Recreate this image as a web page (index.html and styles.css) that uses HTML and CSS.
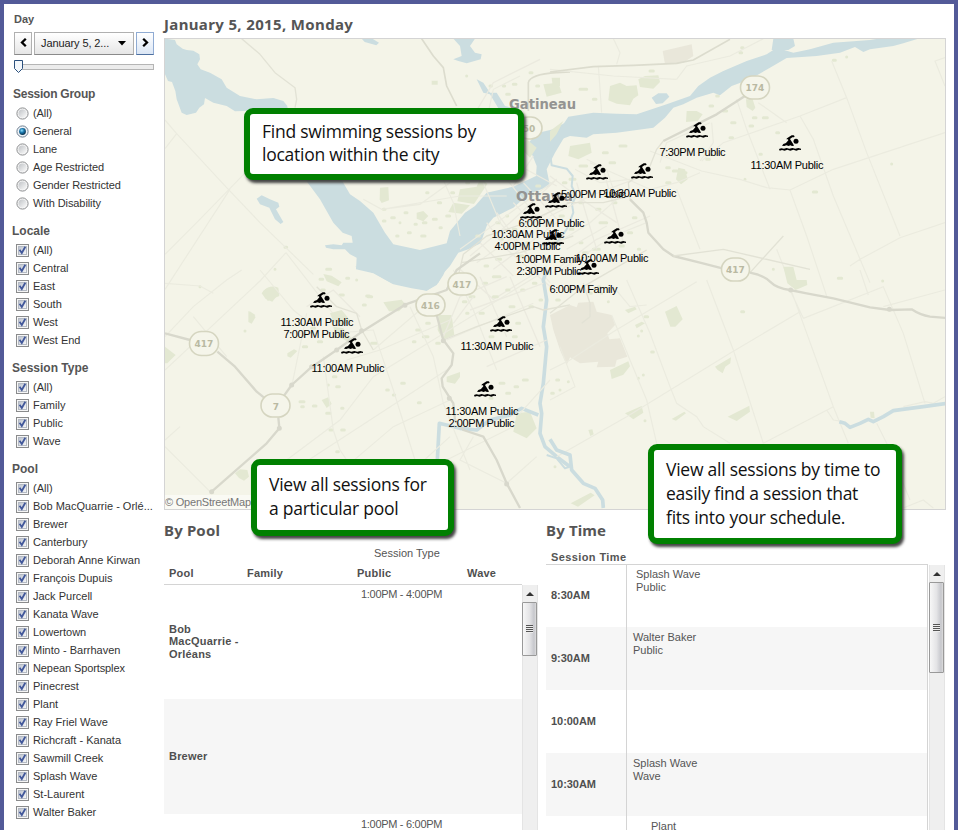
FILE: index.html
```html
<!DOCTYPE html>
<html lang="en">
<head>
<meta charset="utf-8">
<title>Swimming sessions</title>
<link rel="stylesheet" href="styles.css">
</head>
<body>
<svg class="defs" width="0" height="0" aria-hidden="true">
  <defs>
    <linearGradient id="boxg" x1="0" y1="0" x2="1" y2="1"><stop offset="0" stop-color="#b9c0cc"/><stop offset="1" stop-color="#fafafa"/></linearGradient>
    <radialGradient id="dot" cx=".4" cy=".35" r=".7"><stop offset="0" stop-color="#8fe0ff"/><stop offset=".45" stop-color="#1c78ad"/><stop offset="1" stop-color="#06263f"/></radialGradient>
    <linearGradient id="rad" x1="0" y1="0" x2="1" y2="1"><stop offset="0" stop-color="#bfc2c6"/><stop offset="1" stop-color="#fbfbfb"/></linearGradient>
    <symbol id="check" viewBox="0 0 13 13"><rect x=".5" y=".5" width="12" height="12" fill="#f6f6f6" stroke="#8a8b8c"/><rect x="2.5" y="2.500" width="8" height="8" fill="url(#boxg)" stroke="#b4bac4"/><path d="M3.600 5.800l2.200 3.200L9.300 2.800" fill="none" stroke="#41579a" stroke-width="1.800"/></symbol>
    <symbol id="radio" viewBox="0 0 13 13"><circle cx="6.500" cy="6.500" r="5.600" fill="#f5f5f5" stroke="#8c8e90"/><circle cx="6.500" cy="6.500" r="4" fill="url(#rad)"/></symbol>
    <symbol id="radio-on" viewBox="0 0 13 13"><circle cx="6.500" cy="6.500" r="5.600" fill="#eef3f8" stroke="#6f7f90"/><circle cx="6.500" cy="6.500" r="3.400" fill="url(#dot)"/></symbol>
    <symbol id="swim" viewBox="0 0 66 51" overflow="visible"><circle cx="51" cy="19" r="7.500"/><path d="M24 10L38 1h6l3 3-2 3h-5l-7 5 9 14 3 6-6 1-5-2-5 2-7-2-6 2-7-1 4-5 8-3 7-8-1-3h-5z"/><path d="M0 42l7-2 8 1 8-2 8 2 9-2 9 2 9-2 8 2v4l-6-1-8 3-9-3-9 3-9-3-8 3-8-2-7 2z"/></symbol>
  </defs>
</svg>
<div class="page">
  <div class="banner"><span class="tail tail-g"></span><span class="tail t2"></span><span class="tail tail-g t3"></span><span class="tail t4"></span><span class="tail t5"></span></div>

  <aside class="filters">
    <h3 class="day-title">Day</h3>
    <div class="day-picker">
      <button class="step"><svg width="9" height="11" viewBox="0 0 9 11"><path d="M6.800 1.800L3 5.500l3.800 3.700" fill="none" stroke="#000" stroke-width="2.300"/></svg></button>
      <button class="date"><span>January 5, 2...</span><svg width="8" height="5" viewBox="0 0 8 5"><path d="M0 0h8L4 4.600z"/></svg></button>
      <button class="step next"><svg width="9" height="11" viewBox="0 0 9 11"><path d="M2.200 1.800L6 5.500 2.200 9.200" fill="none" stroke="#000" stroke-width="2.300"/></svg></button>
    </div>
    <div class="slider"><svg class="thumb" width="9" height="13" viewBox="0 0 9 13"><path d="M.5.5h8v8l-4 4-4-4z" fill="#f3f7fb" stroke="#2a4f7c"/></svg></div>

    <section class="group"><h3 class="wide">Session Group</h3>
      <ul class="radios">
        <li><svg><use href="#radio"/></svg>(All)</li>
        <li><svg><use href="#radio-on"/></svg>General</li>
        <li><svg><use href="#radio"/></svg>Lane</li>
        <li><svg><use href="#radio"/></svg>Age Restricted</li>
        <li><svg><use href="#radio"/></svg>Gender Restricted</li>
        <li><svg><use href="#radio"/></svg>With Disability</li>
      </ul>
    </section>
    <section class="group"><h3>Locale</h3>
      <ul>
        <li><svg><use href="#check"/></svg>(All)</li>
        <li><svg><use href="#check"/></svg>Central</li>
        <li><svg><use href="#check"/></svg>East</li>
        <li><svg><use href="#check"/></svg>South</li>
        <li><svg><use href="#check"/></svg>West</li>
        <li><svg><use href="#check"/></svg>West End</li>
      </ul>
    </section>
    <section class="group"><h3>Session Type</h3>
      <ul>
        <li><svg><use href="#check"/></svg>(All)</li>
        <li><svg><use href="#check"/></svg>Family</li>
        <li><svg><use href="#check"/></svg>Public</li>
        <li><svg><use href="#check"/></svg>Wave</li>
      </ul>
    </section>
    <section class="group"><h3>Pool</h3>
      <ul>
        <li><svg><use href="#check"/></svg>(All)</li>
        <li><svg><use href="#check"/></svg>Bob MacQuarrie - Orlé...</li>
        <li><svg><use href="#check"/></svg>Brewer</li>
        <li><svg><use href="#check"/></svg>Canterbury</li>
        <li><svg><use href="#check"/></svg>Deborah Anne Kirwan</li>
        <li><svg><use href="#check"/></svg>François Dupuis</li>
        <li><svg><use href="#check"/></svg>Jack Purcell</li>
        <li><svg><use href="#check"/></svg>Kanata Wave</li>
        <li><svg><use href="#check"/></svg>Lowertown</li>
        <li><svg><use href="#check"/></svg>Minto - Barrhaven</li>
        <li class="tight"><svg><use href="#check"/></svg>Nepean Sportsplex</li>
        <li><svg><use href="#check"/></svg>Pinecrest</li>
        <li><svg><use href="#check"/></svg>Plant</li>
        <li><svg><use href="#check"/></svg>Ray Friel Wave</li>
        <li><svg><use href="#check"/></svg>Richcraft - Kanata</li>
        <li><svg><use href="#check"/></svg>Sawmill Creek</li>
        <li><svg><use href="#check"/></svg>Splash Wave</li>
        <li><svg><use href="#check"/></svg>St-Laurent</li>
        <li><svg><use href="#check"/></svg>Walter Baker</li>
      </ul>
    </section>
  </aside>

  <main class="main">
    <h1 class="title">January 5, 2015, Monday</h1>
    <div class="map">
      <svg width="780" height="470" viewBox="165 39 780 470">
        <!-- west and north -->
        <g transform="translate(160 36) scale(.33333)">
          <g class="water">
            <path d="M15 8L45 12 50 25 68 38 80 42 100 44 118 55 120 70 112 85 122 100 150 110 185 130 200 155 240 180 290 190 340 186 370 195 382 210 380 220H300L250 225 225 226 200 210 160 200 135 186 132 205 118 215 108 230 80 237 65 230 50 190 46 165 36 138 24 135 15 115Z"/>
            <path d="M330 200L380 210 430 300 545 432 570 475 600 495 640 530 675 590 700 625 780 642 860 622 870 585 915 530 945 510 980 470 1060 452 1128 420 1130 390 1110 340 1105 320 1135 290 1180 280 1215 260 1215 300 1185 350 1160 400 1170 450 1105 475 1060 515 1000 545 980 570 962 622 925 640 895 650 870 690 850 712 835 740 800 764 755 757 700 745 640 712 588 700 590 665 570 655 555 640 520 640 498 635 495 628 520 625 545 628 550 620 578 620 575 600 548 590 520 560 480 490 437 432 370 330Z"/>
            <path d="M290 488L305 478 330 490 355 500 358 512 348 520 370 558 362 564 345 550 328 515 300 505Z"/>
            <path d="M880 8H945L930 30 945 50 965 55 962 70 920 82 895 75 880 70 905 60 900 30Z"/>
            <path d="M605 8h32l20 12-8 8-35-10z"/>
            <path d="M950 130l20 10 20 30 20 0 25 40 20 5-5 20-30-10-30-50-20-5z"/>
          </g>
          <g class="park">
            <path d="M660 455l25-2 2 40-22 8-6-10zM900 460l50-8 12-28 20 20-40 60-50-8zM880 500l50 8-25 25-40-5zM770 530l20-5 15 15-15 16-20-8zM1100 310l30 25-20 30-30-30zM815 134h18v12h-18z"/>
            <path d="M1150 145l45-5 10 30-45 12zM310 765q20-20 45-10l3 25-35 15zM265 825l22 18-12 20-10-5z"/>
          </g>
          <g class="dots"><path d="M695 545h8M720 560h0M735 530h6M765 565h4M820 550h9M840 575h4M745 590h6M710 600h4M785 600h10M800 470h4M835 500h7M950 600h8M1010 560h9M1040 540h3M1060 580h8M920 120h0M1030 150h4M1060 145h8M1110 110h6M1130 150h6M1040 175h8M990 150h4M1080 240h8M375 634h5M345 700h0M480 730h8M500 700h12M620 780h8M670 520h5M860 540h9M875 470h6M920 440h6M790 560h8M670 555h5M1020 610h7M1100 620h8M1170 560h8M1010 670h12M1080 660h9M975 690h8M1130 450h9"/></g>
          <g class="thin">
            <path d="M15 252L50 293 200 455 300 560 460 715"/><path d="M15 338L50 293M15 655L110 560 300 365 430 235M15 760L210 460M378 650L300 735 15 1002M378 650L540 860"/>
            <path d="M610 490L665 520 780 505 870 440M665 520L900 480 1040 480M850 432L880 500 900 600M970 440L1020 560 1170 740M1040 430L1170 590M900 640L1190 430M950 680L1180 520M980 250L1000 160 1080 120M1020 340L980 430"/>
          </g>
          <g class="city"><path d="M980 560L1040 640 1180 760M1010 530L1120 680M1060 500L1190 640M930 660L1050 560 1190 430M1000 700L1190 560M900 700L1000 790 1160 690M1090 440L1200 560M1120 360L1060 450M960 620L1060 720M1190 450L1080 390M940 240L1000 140 1140 70"/></g>
          <g class="road"><path d="M785 8L820 60 850 95 860 150 890 210M1105 225V140Q1110 115 1190 110L1230 108"/><path d="M245 8L300 55 345 110 405 155 410 190 405 215M1230 500L1100 560 980 600 910 655 890 740M905 680L1080 650 1240 600" class="soft"/></g>
        </g>
        <!-- east and north -->
        <g transform="translate(550 36) scale(.33333)">
          <g class="park"><path d="M180 150l30-10 20 10 30-2 5 30-15 10-10 20-40-5-25-10zM265 130l20-10 40-2 5 20-20 20-40-5zM5 125h25v25H8zM60 330l60-10 5 30-40 20-30-10zM0 285l40-30-20 40-20 22zM385 395l20 5 8 30-20 15-15-15zM410 225l30 0 18 10-15 20-35 3zM588 190l20 0 8 25-8 10-18-12z"/></g>
          <path class="sand" d="M338 45L425 25 430 60 400 80 345 84Z"/>
          <g class="dots"><path d="M90 160h20M30 200h15M130 190h8M300 105h10M570 50h5M575 35h4M850 73h6M890 63h0M480 210h8M500 180h5M520 225h10M545 260h10M610 245h8M640 245h12M600 270h8M680 290h6M1025 384h0M790 468h10M630 355h4M450 340h10M470 370h8M540 305h8M370 405h12M350 440h10M400 410h8M585 430h0M150 560h20M210 630h10M130 640h18M90 620h6M235 590h10M250 545h8M40 440h8M210 330h18M160 350h12M180 380h14M90 390h20M60 430h15M350 395h8M670 700h0M265 640h4M90 500h8M140 520h10M190 500h8M60 580h9M30 540h10M100 650h12"/></g>
          <g class="water">
            <path d="M-12 345L5 320 30 280 55 242 130 230 200 233 260 235 350 205 420 180 445 150 480 125 520 105 590 75 650 55 680 35 730 50 780 40 850 20 960 12 985 8H1105L1060 22 1030 30 960 40 940 48 915 33 870 50 800 60 710 66 660 95 600 130 545 150 510 178 490 170 440 185 400 205 370 215 345 245 310 275 200 290 130 295 110 305 60 300 20 315 5 345-12 365Z"/>
            <path d="M670 8h60l5 22-20 12-50 0zM305 185l20-13 25 0 8 10-20 20-20 2z"/>
            <path class="creek" d="M0 350L5 388 50 398 68 420 65 450 78 480 66 505 70 530 50 580 20 620-10 640"/>
          </g>
          <g class="thin">
            <path d="M190 8L210 50 200 85M145 90L155 230M845 75L890 185 950 350 1050 600M890 185L750 240 520 320 455 375M750 240L790 310 850 480 960 740M560 190L590 280 660 460M625 200L710 260M300 345L455 405 570 430 650 455 720 462 770 600 830 780M720 462L850 400 1185 290M1185 65L1155 75 1185 150M380 460L450 640M1185 560L1050 605 930 670 900 690M300 460L380 440 450 410M380 130L410 90 540 60 640 8M330 380L350 320 480 260M680 640L720 740"/>
            <path d="M200 490L120 560-10 640M200 490L170 400 110 370M120 380L300 460M75 400L150 440 240 430M290 560L190 600 20 710M50 640L170 570M0 100L190 120 380 130M450 375L490 320 485 260"/>
          </g>
          <g class="city"><path d="M0 420L80 480 200 560M80 440L140 640M160 400L220 620M0 540L120 480 280 420M20 700L140 610 300 540"/></g>
          <g class="road"><path d="M0 108L130 92 250 88 380 82 430 72 540 10"/><path class="big" d="M600 170L500 235 340 315M240 490L280 530 290 560 295 590 340 640 370 660 450 680 520 698"/><path class="soft" d="M340 315L320 340 300 390 235 440 240 490M240 480L160 500 50 500M600 710L700 600M370 660L520 640 780 700"/></g>
        </g>
        <!-- west and south -->
        <g transform="translate(160 270) scale(.33333)">
          <g class="park"><path d="M670 97l55-8 12 15-20 20-30 0zM835 135l40 0 8 60-35 15-15-30zM305 70q10-20 40-18l12 18-20 25-20-8zM268 123l18 12-15 20zM382 250l20-12 10 5-20 20-10-4zM15 230l32 25-25 25-7 0zM225 610l15-12 22 2 5 20-15 12-15-8zM490 12l25 5 30 20-10 12-35-15zM510 130l35-10 25 30-20 15-30-10zM860 320l40-14 0 15-15 20-25-5zM1070 430l40-5 20 50-30 30-40-20zM485 390l20-8 10 20-15 12zM520 170l30 5 25 30-10 10-40-20z"/></g>
          <g class="dots"><path d="M485 60h8M540 75h10M560 25h6M590 30h0M625 80h10M610 105h6M420 395h12M425 410h5M460 408h8M500 430h10M545 415h4M520 320h8M530 350h8M505 345h0M510 480h6M545 480h8M530 545h5M430 230h10M475 215h10M455 175h9M635 220h14M680 360h5M725 340h8M700 375h4M775 398h6M770 180h10M800 160h8M790 200h14M830 220h8M760 215h5M990 385h6M1020 340h12M1040 370h9M970 40h10M1000 80h12M1040 60h7M930 80h12M960 130h10M1085 60h7M1110 110h8M1070 160h9M1060 200h9M920 130h4M990 200h9M1090 330h12M1065 350h8M120 50h0M255 183h0M1000 20h20M910 95h8M1050 110h12M1120 40h8M1140 90h5"/></g>
          <g class="water">
            <path class="river" d="M1160 0L1150 30 1160 90 1150 170 1160 230 1150 340 1140 400 1145 430 1140 490 1155 530 1190 560 1230 590"/>
            <path class="river" d="M832 570L838 460 900 475 950 480 990 450 1050 435 1085 415 1135 435"/>
            <path d="M585-10L640 8 695 40 760 52 800 62 830 45 850 15 860-10z"/>
          </g>
          <g class="thin">
            <path d="M15 200L100 110 200 30 245 0M300 0L400 120 450 160M15 530L90 605 150 665M15 510L60 470M440 130L395 350M520 190L640 180 700 360 765 570M300 630L540 450 640 320 1160 0M490 260L520 480 540 540M400 600L860 300M560 270L660 240 870 150M500 640L700 470 870 390M620 570L760 600 870 500M750 110L820 260 850 400 930 600M860 210L1120 100M880 0L940 120 1010 300M840 580L1060 470M940 500L900 570 1040 640 1130 560M1080 430L1170 330M780 120L640 240M540 540L580 600M200 260L100 140M15 40L120 48 160 70"/>
          </g>
          <g class="city"><path d="M850 200L900 80 1040 20M930 120L1150 40M960 20L1040 200M1050 20L1140 230M980 290L1160 210M880 160L940 80M440 110L520 60 600 140"/></g>
          <g class="road">
            <path class="big" d="M15 190L90 210M172 245L225 290 290 365 315 385M370 380L395 345 450 295 530 240 610 182 735 104 860 60 890 0 960-50M355 442L358 475 320 520 155 665"/>
            <path class="big" d="M830 135L850 210 880 250 875 285 845 325 848 350 880 400 885 450 910 480 970 500 1010 570 1040 640 1080 714"/>
            <path class="soft" d="M850 210L950 170 1120 110 1150 120 1230 105M470 50L530 110 590 130 605 180 640 240"/>
            <path class="knots" d="M395 345h0M530 240h0M605 182h0M735 106h0M850 212h0M868 385h0M1040 642h0M155 665h0M358 475h0M455 290h0"/>
          </g>
        </g>
        <!-- east and south -->
        <g transform="translate(550 270) scale(.33333)">
          <path class="sand" d="M0 135L60 105 80 112 85 98 130 95 140 125 185 135 195 165 172 190 178 208 210 205 232 260 200 270 195 290 140 292 145 275 90 280 60 262 50 285 30 240 10 180Z"/>
          <g class="park"><path d="M345 125l35-17 18 40-22 22-15 0zM180 300l55-26 5 15-20 25-35 13zM495 290l48-28-2 18-15 10-8 20-15-10zM533 440l65-33 2 18-40 28zM225 430l50-22 5 20-30 20zM365 447l38-22 5 5-30 22zM62 700l60-32 12 8-50 34zM700-10h30l10 40 30 0 2 15-35 15-25-20zM225 120l30-10 5 8-25 12zM255 165l20-10 10 5-25 15zM960 425l12 0 2 20-12-2zM115 480l12-2 4 15-10 5z"/></g>
          <g class="dots"><path d="M285 140h8M575 125h6M865 25h10M998 33h0M305 246h5M265 198h0M275 183h0M280 315h0M265 325h0M285 452h0M20 330h6M55 335h0M30 360h0M5 370h5M145 50h4M155 70h0M175 95h0M120 70h4M60 60h8M20 90h8M15 590h0"/></g>
          <g class="thin"><path d="M185 135L240 270 290 390 320 520M470 30L550 240 640 520M725 65L850 410 895 520M0 300L60 270 190 185 440 35M0 390L75 350 30 230M20 560L230 440 540 250 750 125M230 30L300 190 360 350 380 400 440 440 460 470 540 520M640 520L850 410M760 145L1000 50 1060 190 1125 400M720 60L760 145M1000 110L1185 60M830 420L850 450 880 455M1060 410L1125 395 1150 400 1185 380M980 460L1010 520 1080 690M1060 714L1120 690 1150 714M190 50L240 110 290 105M955 75L930 0"/></g>
          <g class="road"><path class="big" d="M600 8Q640 15 660 35T720 60L770 70 850 85 960 112 1020 120 1085 118Q1110 135 1140 140L1190 144"/><path class="soft" d="M100 40L120 100 120 140 95 160M0 130L100 50 290-60"/><path class="knots" d="M722 60h0M1018 118h0"/></g>
          <g class="water"><path class="river" d="M868 455L885 460 900 472 930 460 955 448 970 455 1000 440 1030 422 1080 415 1120 410 1190 400"/><path class="river" d="M0 508L20 540 60 555 65 600 100 640 135 655 158 690 160 714"/><path class="creek" d="M-10 555L20 565 45 595 60 590"/></g>
        </g>

        <g class="shield">
          <rect x="740.500" y="76" width="29" height="23" rx="11.500"/><text x="755" y="91">174</text>
          <rect x="517" y="117" width="25" height="22" rx="11"/><text x="529" y="132">50</text>
          <rect x="189.500" y="331.500" width="29" height="24" rx="12"/><text x="204" y="347">417</text>
          <rect x="261" y="394" width="29" height="23" rx="11.500"/><text x="276" y="410">7</text>
          <rect x="416" y="294" width="29" height="22" rx="11"/><text x="430.500" y="309">416</text>
          <rect x="448" y="273" width="29" height="22" rx="11"/><text x="462" y="288">417</text>
          <rect x="721.500" y="258" width="28" height="23" rx="11.500"/><text x="735.500" y="273">417</text>
        </g>
        <g class="city-name"><text x="509" y="109" textLength="67" lengthAdjust="spacingAndGlyphs">Gatineau</text><text x="516" y="201" textLength="57" lengthAdjust="spacingAndGlyphs">Ottawa</text></g>

        <g class="pools">
          <use href="#swim" x="686" y="122" width="22" height="17"/><use href="#swim" x="779" y="135" width="22" height="17"/>
          <use href="#swim" x="586" y="164" width="22" height="17"/><use href="#swim" x="631" y="163" width="22" height="17"/>
          <use href="#swim" x="545" y="192" width="22" height="17"/><use href="#swim" x="520" y="203" width="22" height="17"/>
          <use href="#swim" x="542" y="229" width="22" height="17"/><use href="#swim" x="604" y="228" width="22" height="17"/>
          <use href="#swim" x="577" y="259" width="22" height="17"/><use href="#swim" x="310" y="292" width="22" height="17"/>
          <use href="#swim" x="341" y="338" width="22" height="17"/><use href="#swim" x="490" y="316" width="22" height="17"/>
          <use href="#swim" x="474" y="381" width="22" height="17"/>
          <text x="659.500" y="156" textLength="66">7:30PM Public</text>
          <text x="750.500" y="169" textLength="73">11:30AM Public</text>
          <text x="561" y="198" textLength="65">5:00PM Public</text>
          <text x="603.500" y="197" textLength="73">10:30AM Public</text>
          <text x="518.500" y="227" textLength="66">6:00PM Public</text>
          <text x="491.500" y="238" textLength="73">10:30AM Public</text>
          <text x="494.500" y="250" textLength="66">4:00PM Public</text>
          <text x="515.500" y="263" textLength="68">1:00PM Family</text>
          <text x="516.500" y="275" textLength="65">2:30PM Public</text>
          <text x="575.500" y="262" textLength="73">10:00AM Public</text>
          <text x="549.500" y="293" textLength="68">6:00PM Family</text>
          <text x="280.500" y="326" textLength="73">11:30AM Public</text>
          <text x="283.500" y="338" textLength="66">7:00PM Public</text>
          <text x="311.500" y="372" textLength="73">11:00AM Public</text>
          <text x="460.500" y="350" textLength="73">11:30AM Public</text>
          <text x="445.500" y="415" textLength="73">11:30AM Public</text>
          <text x="448.500" y="427" textLength="66">2:00PM Public</text>
        </g>
        <rect x="165" y="495" width="100" height="14" fill="#fff" opacity=".5"/>
        <text class="credit" x="165" y="506" textLength="86">© OpenStreetMap</text>
      </svg>
    </div>

    <div class="tables">
      <section class="by-pool">
        <h2>By Pool</h2>
        <div class="pool-super">Session Type</div>
        <div class="pool-head"><b>Pool</b><b>Family</b><b>Public</b><b>Wave</b></div>
        <div class="scroller">
          <div class="rows">
            <div class="pool-row first"><b>Bob<br>MacQuarrie -<br>Orléans</b><span></span><span>1:00PM - 4:00PM</span><span></span></div>
            <div class="pool-row alt"><b>Brewer</b><span></span><span></span><span></span></div>
            <div class="pool-row"><b></b><span></span><span>1:00PM - 6:00PM</span><span></span></div>
          </div>
          <div class="bar"><i class="up"></i><i class="grip short"></i></div>
        </div>
      </section>
      <section class="by-time">
        <h2>By Time</h2>
        <div class="time-head">Session Time</div>
        <div class="scroller">
          <div class="rows">
            <div class="time-row"><b>8:30AM</b><p class="in1">Splash Wave<br>Public</p></div>
            <div class="time-row alt"><b>9:30AM</b><p>Walter Baker<br>Public</p></div>
            <div class="time-row"><b>10:00AM</b><p></p></div>
            <div class="time-row alt"><b>10:30AM</b><p>Splash Wave<br>Wave</p></div>
            <div class="time-row"><b></b><p class="in2">Plant</p></div>
          </div>
          <div class="bar"><i class="up"></i><i class="grip long"></i></div>
        </div>
      </section>
    </div>
  </main>

  <div class="callout find">Find swimming sessions by<br>location within the city</div>
  <div class="callout pool">View all sessions for<br>a particular pool</div>
  <div class="callout time">View all sessions by time to<br>easily find a session that<br>fits into your schedule.</div>
</div>
</body>
</html>
```
FILE: styles.css
```css
* { box-sizing: border-box; margin: 0; padding: 0; }
body { font: 11px "Liberation Sans", Arial, sans-serif; color: #333; background: #fff; }
.defs { position: absolute; }
.page { position: relative; width: 958px; height: 830px; overflow: hidden; display: flex; border: solid #535a98; border-width: 4px 4px 0 4px; }
.page ul { list-style: none; }

.banner { position: absolute; left: -4px; top: -4px; width: 958px; height: 4px; }
.tail { position: absolute; top: 0; left: 455px; width: 1px; height: 1px; background: #c9cce0; }
.tail-g { left: 389px; width: 6px; background: #fff; }
.t3 { left: 589px; }
.t4 { left: 674px; }
.t5 { left: 724px; }

.filters { width: 160px; flex: none; padding-left: 8px; }
.filters h3 { font-size: 12px; line-height: 20px; height: 20px; color: #555; }
.filters h3.wide { padding-left: 1px; letter-spacing: -.25px; }
.filters .day-title { font-size: 11px; padding: 5px 0 0 2px; height: 28px; }
.day-picker { display: flex; gap: 2px; padding-left: 2px; }
.day-picker button { display: flex; align-items: center; justify-content: center; height: 23px; border: 1px solid #b0b0b0; border-bottom-color: #8a8a8a; background: linear-gradient(#fff, #e6e6e6); font: inherit; color: #222; }
.day-picker .step { width: 18px; padding-bottom: 2px; }
.day-picker .next { border-color: #8fabd3; border-bottom-color: #4d6f9f; background: linear-gradient(#fff, #dbe6f5); }
.day-picker .date { width: 100px; justify-content: space-between; padding: 0 7px 1px 6px; }
.day-picker .date span { letter-spacing: -.1px; }
.slider { position: relative; height: 6px; margin: 9px 0 14px 6px; width: 136px; border: 1px solid #b5b5b5; background: #ececec; }
.slider .thumb { position: absolute; left: -5px; top: -5px; }
.group { margin-bottom: 9px; }
.group li { display: flex; align-items: center; gap: 4px; height: 18px; padding-left: 4px; white-space: nowrap; }
.group li.tight { letter-spacing: -.1px; }
.group li svg { width: 13px; height: 13px; flex: none; }
.radios li { letter-spacing: -.08px; }

.main { width: 782px; flex: none; }
.title { font: bold 15px/18px "Noto Sans", "Open Sans", sans-serif; letter-spacing: .35px; color: #555; padding-top: 11px; height: 34px; white-space: nowrap; }
.map { height: 472px; border: 1px solid #d4d4d4; background: #f4f4e8; overflow: hidden; }
.map svg { display: block; }
.water { fill: #cbdde0; stroke: none; }
.water .river, .water .creek { fill: none; stroke: #cbdde0; stroke-width: 11; stroke-linejoin: round; }
.water .creek { stroke-width: 6; }
.park { fill: #e3e8d2; }
.sand { fill: #e9e7da; }
.dots { fill: none; stroke: #e3e8d2; stroke-width: 9; stroke-linecap: round; }
.thin { fill: none; stroke: #ebebdf; stroke-width: 3.5; }
.city { fill: none; stroke: #ebeadf; stroke-width: 4; }
.road { fill: none; stroke: #dcdcce; stroke-width: 5; stroke-linejoin: round; }
.road .big { stroke: #d8d8cc; stroke-width: 7; }
.road .soft { stroke: #e2e2d5; stroke-width: 4; }
.road .knots { stroke: #d8d8cc; stroke-width: 15; stroke-linecap: round; }
.shield rect { fill: #f5f5ea; stroke: #d5d5c0; stroke-width: 1.6; }
.shield text { font: bold 9px "DejaVu Sans", sans-serif; fill: #b9b9a2; text-anchor: middle; }
.city-name text { font: bold 14.5px "DejaVu Sans", sans-serif; fill: #949492; }
.pools { fill: #000; }
.pools text { font: 11px "Liberation Sans", Arial, sans-serif; }
.credit { font: 11px "Liberation Sans", Arial, sans-serif; fill: #777; }

.tables { display: grid; grid-template-columns: 374px 400px; column-gap: 8px; height: 316px; color: #555; }
.tables b { color: #4f4f4f; letter-spacing: .2px; }
.tables h2 { font: bold 15px/20px "Noto Sans", "Open Sans", sans-serif; letter-spacing: .15px; color: #555; padding-top: 10px; height: 36px; }
.pool-super { height: 16px; padding-left: 210px; line-height: 15px; }
.pool-head { display: grid; grid-template-columns: 78px 110px 110px 55px; padding: 5px 0 0 5px; height: 23px; width: 358px; border-bottom: 1px solid #d4d4d4; }
.scroller { display: flex; height: 245px; overflow: hidden; }
.rows { width: 358px; }
.pool-row { display: grid; grid-template-columns: 83px 110px 112px 53px; height: 115px; }
.pool-row.first { height: 114px; }
.pool-row b { align-self: center; padding: 0 0 1px 5px; line-height: 12.5px; white-space: nowrap; }
.pool-row span { padding: 4px 0 0 4px; white-space: nowrap; letter-spacing: -.3px; }
.pool-row.first span { padding-top: 3px; }
.alt { background: #f6f6f6; }
.bar { width: 16px; background: #efefef; border: solid #e4e4e4; border-width: 0 1px; }
.bar .up { display: block; height: 17px; padding: 7px 0 0 3px; }
.bar .up::after { content: ""; display: block; width: 0; border: 4px solid transparent; border-top: 0; border-bottom: 4px solid #333; }
.bar .grip { display: block; width: 15px; margin-left: -1px; border: 1px solid #999; border-radius: 1px; background: repeating-linear-gradient(#555 0 1px, #eee 1px 2px) center / 7px 8px no-repeat, linear-gradient(90deg, #f7f7f7, #e4e4e6 50%, #c6c7cc 85%, #ddd); }
.bar .short { height: 54px; }
.bar .long { height: 91px; }

.time-head { font-weight: bold; letter-spacing: .4px; height: 19px; width: 382px; line-height: 13px; padding: 5px 0 0 5px; border-bottom: 1px solid #d4d4d4; }
.by-time .scroller { height: 265px; }
.by-time .rows { width: 382px; border-right: 1px solid #d4d4d4; }
.by-time .bar { margin-left: 1px; }
.time-row { display: flex; height: 63px; }
.time-row:first-child { height: 62px; }
.time-row b { width: 81px; border-right: 1px solid #d4d4d4; padding: 25px 0 0 5px; letter-spacing: -.05px; }
.time-row p { padding: 4px 0 0 6px; line-height: 13px; }
.time-row:first-child b { padding-top: 24px; }
.time-row .in1 { padding: 3px 0 0 9px; }
.time-row .in2 { padding-left: 24px; }

.callout { position: absolute; border: 6px solid #008000; border-radius: 9px; background: #fff; color: #111; font: 17.5px/24px "Open Sans", "Noto Sans", sans-serif; letter-spacing: -.25px; box-shadow: 2px 3px 3px #444; white-space: nowrap; padding: 6px 12px; }
.find { left: 240px; top: 104px; width: 280px; height: 72px; line-height: 23px; }
.pool { left: 247px; top: 455px; width: 203px; height: 77px; padding-top: 7px; }
.time { left: 644px; top: 440px; width: 254px; height: 100px; padding-top: 7px; }
```
